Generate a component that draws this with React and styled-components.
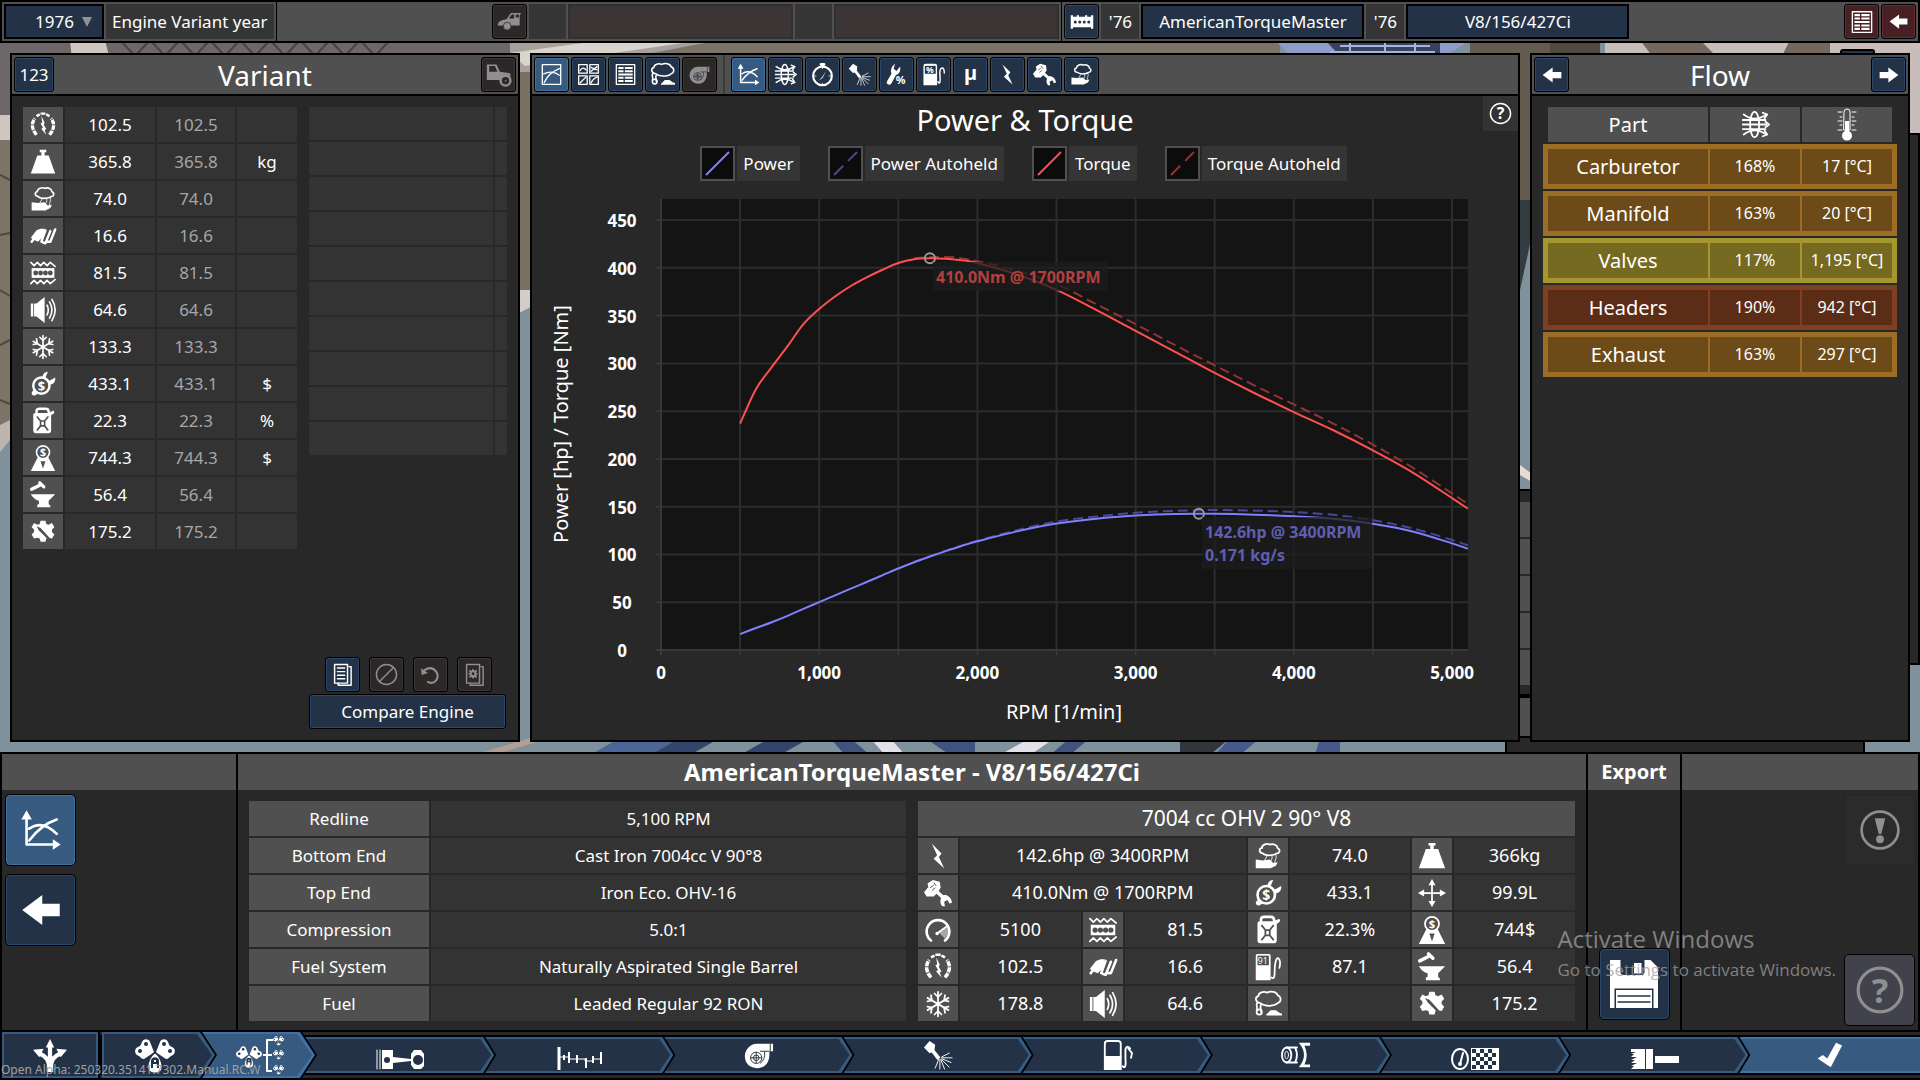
import styled, { createGlobalStyle, css } from 'styled-components'

const GlobalStyle = createGlobalStyle`
  *, *::before, *::after {
    box-sizing: border-box;
  }

  body {
    margin: 0;
    background: #7f929c;
    color: #ffffff;
    font-family: "Noto Sans", "Open Sans", sans-serif;
    font-size: 17px;
    line-height: 23px;
  }

  button, select {
    font: inherit;
    color: inherit;
    padding: 0;
    margin: 0;
    cursor: pointer;
  }

  h1, h2, p {
    margin: 0;
    font-weight: normal;
  }
`;

/* ---------- icons ---------- */

const stroke = (width) => ({
  fill: 'none',
  stroke: 'currentColor',
  strokeWidth: width,
  strokeLinecap: 'round',
  strokeLinejoin: 'round',
});

const cloud = 'M9 14C5 14 4 10 8 8C8 4 13 3 16 4C19 2 25 3 25 7C30 8 29 13 25 14C23 16 19 16 17 15C14 16 11 16 9 14Z';
const gearPath = 'M13 2h6l1 4 3 1 4-2 3 5-3 3v3l3 3-3 5-4-1-3 1-1 4h-6l-1-4-3-1-4 1-3-5 3-3v-3l-3-3 3-5 4 2 3-1z';

// drawn in a 40 x 34 box
const Flower = () => (
  <>
    <g fill="currentColor">
      <path d="M18 14L9 20C6 20 6 18 4 17C-1 16-1 9 3 8C6 7 6 5 7 3C9-1 14 0 15 3L19 13Z" />
      <path d="M22 14L31 20C34 20 34 18 36 17C41 16 41 9 37 8C34 7 34 5 33 3C31-1 26 0 25 3L21 13Z" />
    </g>
    <path d="M20 14C23 16 27 22 27 28C27 32 24 34 20 34C16 34 13 32 13 28C13 22 17 16 20 14Z" fill="currentColor" stroke="#233246" strokeWidth="1" />
    <g fill="#233246">
      <circle cx="11" cy="5" r="2" />
      <circle cx="5" cy="12" r="2" />
      <circle cx="29" cy="5" r="2" />
      <circle cx="35" cy="12" r="2" />
      <path d="M16 29V22C16 17 24 17 24 22V29H22V25H18V29ZM19 23H21V21H19Z" />
    </g>
  </>
);

const icons = {
  gauge: (
    <>
      <path d="M8 28Q-1 17 6 8" {...stroke(4)} strokeLinecap="butt" strokeDasharray="6 1" />
      <path d="M24 28Q33 17 26 8" {...stroke(4)} strokeLinecap="butt" strokeDasharray="6 1" />
      <path d="M8 5L12 3M20 3L24 5M13 2H19" {...stroke(3)} strokeLinecap="butt" />
      <path d="M14 5L18 13 17 16 20 21 18 22 20 28 14 21 16 19 13 14 15 13Z" fill="currentColor" />
    </>
  ),
  weight: <path d="M12 1H20V4H18V8H23L31 30H1L9 8H14V4H12Z" fill="currentColor" />,
  smoothness: (
    <>
      <path d="M10 13C5 12 6 7 9 7C9 3 15 1 18 3C22 1 27 4 27 7C31 9 29 13 26 13C22 16 13 16 10 13Z" {...stroke(2)} />
      <path d="M25 14C27 18 22 23 24 26M20 15C23 20 17 22 18 25M15 16L12 21" {...stroke(1)} />
      <path d="M2 20L10 21 18 20 22 24 27 23 25 27 19 30 2 30Z" fill="currentColor" />
    </>
  ),
  response: (
    <>
      <path d="M1 18L8 9 13 7 18 7 16 17 10 23 5 21Z" fill="currentColor" />
      <path d="M2 23L5 19M19 9L14 23M25 10L19 25 16 24M31 8L25 23H22" {...stroke(3)} />
    </>
  ),
  reliability: (
    <>
      <path d="M1 3L5 7 9 3 13 7 17 3 21 7 25 3 31 8M1 29L5 25 9 29 13 25 17 29 21 25 25 29 31 24" {...stroke(2)} />
      <path d="M2 10H30V22H2Z" fill="currentColor" />
      <g fill="#505050">
        <circle cx="7" cy="16" r="3" />
        <circle cx="13" cy="16" r="3" />
        <circle cx="19" cy="16" r="3" />
        <circle cx="25" cy="16" r="3" />
      </g>
    </>
  ),
  sound: (
    <>
      <path d="M1 8H4V24H1ZM5 8H8L18 0V32L8 24H5Z" fill="currentColor" />
      <path d="M21 10Q24 16 21 22M24 6Q30 16 24 26M27 3Q35 16 27 29" {...stroke(2)} />
    </>
  ),
  snow: (
    <g {...stroke(2)}>
      <path d="M16 2V30M4 9L28 23M4 23L28 9" />
      <path d="M12 4L16 8 20 4M12 28L16 24 20 28M4 13L9 12 8 6M28 13L23 12 24 6M4 19L9 20 8 26M28 19L23 20 24 26" />
    </g>
  ),
  service: (
    <>
      <path d="M22 1L19 8 24 12 31 8C32 15 26 18 22 16L8 29C5 32 0 29 3 25L16 12C14 6 17 1 22 1Z" fill="currentColor" />
      <circle cx="14" cy="18" r="10" fill="#505050" stroke="currentColor" strokeWidth="3" />
      <text x="14" y="24" textAnchor="middle" fontSize="16" fontWeight="bold" fill="currentColor">$</text>
    </>
  ),
  jerrycan: (
    <>
      <path d="M8 7V4Q8 1 12 1H19Q23 1 23 5" {...stroke(3)} />
      <path d="M4 8Q4 6 7 6H22L29 3 30 6 26 9V28Q26 31 23 31H7Q4 31 4 28Z" fill="currentColor" />
      <path d="M9 11L13 16V22L9 27M22 11L18 16V22L22 27M13 16H18M13 22H18" {...stroke(2)} stroke="#505050" />
    </>
  ),
  person: (
    <>
      <path d="M10 14L1 32H31L22 14Z" fill="currentColor" />
      <path d="M13 20H19L16 29Z" fill="#505050" />
      <circle cx="16" cy="9" r="8" fill="#505050" stroke="currentColor" strokeWidth="2" />
      <text x="16" y="14" textAnchor="middle" fontSize="13" fontWeight="bold" fill="currentColor">$</text>
    </>
  ),
  anvil: (
    <>
      <path d="M2 9L12 4M12 1L17 6" {...stroke(4)} />
      <path d="M1 15H31L23 23V27L25 29V31H9V28L11 27V23C6 22 3 18 1 15Z" fill="currentColor" />
    </>
  ),
  gear: (
    <>
      <path d={gearPath} fill="currentColor" />
      <path d="M8 9L13 11 24 23 22 25 11 14Z" fill="#505050" />
    </>
  ),
  bolt: <path d="M9 2L20 13 17 17 23 30 11 19 15 15Z" fill="currentColor" />,
  fist: (
    <>
      <path d="M0 15L5 9 4 5 10 1 18 3 19 10 16 15 11 20 3 20Z" fill="currentColor" />
      <path d="M7 10L11 7M9 13L13 10M11 4L14 8" stroke="#3c434c" strokeWidth="1" />
      <path d="M14 14L24 23" {...stroke(4)} strokeLinecap="butt" />
      <path d="M21 19C25 17 31 20 32 27L29 28 27 24 23 26 24 31 21 31C18 28 18 23 21 19Z" fill="currentColor" />
    </>
  ),
  tacho: (
    <>
      <path d="M8 28A13 13 0 1 1 24 28" {...stroke(3)} />
      <path d="M16 18L28 10V19L24 26Z" fill="currentColor" opacity="0.5" />
      <path d="M15 20L27 11" {...stroke(2)} />
      <circle cx="15" cy="20" r="2" fill="currentColor" />
    </>
  ),
  octane: (
    <>
      <path d="M2 31V3Q2 1 4 1H17Q19 1 19 3V31Z" fill="currentColor" />
      <path d="M4 3H17V14H4Z" fill="#505050" />
      <text x="10" y="12" textAnchor="middle" fontSize="10" fill="currentColor">91</text>
      <path d="M20 28C25 32 23 20 24 14Q25 5 28 6 31 9 29 17" {...stroke(2)} />
    </>
  ),
  emissions: (
    <>
      <path d="M7 15C1 14 1 8 5 7C5 3 11 1 15 3C19 1 26 2 27 6C32 8 31 14 27 15C23 19 12 19 7 15Z" {...stroke(2)} />
      <path d="M4 14C1 18 5 19 3 23M8 17C6 21 9 21 8 25" {...stroke(2)} />
      <circle cx="6" cy="25" r="3" {...stroke(2)} />
      <path d="M14 28L19 23H25L29 26 32 27V29H14Z" fill="currentColor" />
    </>
  ),
  size: (
    <>
      <path d="M16 4V28M4 16H28" {...stroke(2)} />
      <path d="M16 0L20 7H12ZM16 32L12 25H20ZM0 16L7 12V20ZM32 16L25 20V12Z" fill="currentColor" />
    </>
  ),
  miniGraph: (
    <>
      <path d="M2 1H30V31H2Z" {...stroke(2)} />
      <path d="M5 28Q12 13 28 7M4 15Q17 9 28 17" {...stroke(2)} />
    </>
  ),
  fourGraphs: (
    <>
      <path d="M1 1H14V14H1ZM18 1H31V14H18ZM1 18H14V31H1ZM18 18H31V31H18Z" {...stroke(2)} />
      <path d="M3 10Q8 3 12 9M20 5L29 9M20 11L29 4M3 29Q8 24 12 20M20 29Q23 22 29 20" {...stroke(2)} />
    </>
  ),
  sheet: (
    <>
      <path d="M2 1H30V31H2Z" {...stroke(2)} />
      <path d="M5 6H13M15 6H27M5 11H13M15 11H27M5 16H27M5 21H13M15 21H27M5 26H13M15 26H27" {...stroke(3)} strokeLinecap="butt" />
    </>
  ),
  turbo: (
    <>
      <path d="M14 4H31V12H27C28 22 24 30 14 30C2 30-2 18 3 10C6 6 9 4 14 4Z" fill="currentColor" />
      <g fill="none" stroke="#2c3038" strokeWidth="1">
        <circle cx="13" cy="19" r="6" />
        <circle cx="13" cy="19" r="3" />
        <path d="M7 19H19M13 13V25M22 12Q23 21 17 25M28 4V12M17 12H27" />
      </g>
    </>
  ),
  axes: (
    <>
      <path d="M5 7V27H27" {...stroke(2)} strokeLinecap="butt" />
      <path d="M5 1L9 8H1ZM31 27L25 31V23Z" fill="currentColor" />
      <path d="M7 24Q16 12 28 8M7 15Q17 8 28 19" {...stroke(2)} />
    </>
  ),
  flow: (
    <g {...stroke(2)}>
      <ellipse cx="15" cy="16" rx="5" ry="14" />
      <path d="M2 16H28M2 11H27M2 21H27M3 5Q15 14 28 5M3 27Q15 18 28 27" />
      <path d="M24 3L29 5 26 9M27 13L31 16 27 19M26 23L29 27 24 29" />
    </g>
  ),
  stopwatch: (
    <>
      <circle cx="16" cy="18" r="13" {...stroke(3)} />
      <path d="M14 2H18" {...stroke(4)} />
      <path d="M10 25L15 20 21 11 16 21Z" fill="currentColor" />
      <path d="M16 6V8M16 28V30M5 18H7M25 18H27" {...stroke(1)} />
    </>
  ),
  spray: (
    <>
      <path d="M1 8L7 1 13 5 12 12 7 14Z" fill="currentColor" />
      <path d="M10 11L17 20" {...stroke(4)} strokeLinecap="butt" />
      <path d="M17 20L13 30M18 21L18 31M19 21L23 31M20 21L28 29M20 20L30 24M20 19L31 19M20 18L28 14" {...stroke(1)} />
    </>
  ),
  wrenchPercent: (
    <>
      <path d="M5 30Q1 29 3 25L9 15Q6 7 14 1L12 8 16 11 21 5Q23 14 15 17L9 28Q7 31 5 30Z" fill="currentColor" />
      <text x="15" y="29" fontSize="15" fontWeight="bold" fill="currentColor">%</text>
    </>
  ),
  pumpPercent: (
    <>
      <path d="M2 31V4Q2 1 5 1H18Q21 1 21 4V31Z" fill="currentColor" />
      <path d="M4 4H19V15H4Z" fill="#233246" />
      <text x="11" y="14" textAnchor="middle" fontSize="12" fontWeight="bold" fill="currentColor">%</text>
      <path d="M22 26Q26 32 25 19 24 7 28 7 31 7 31 14" {...stroke(2)} />
    </>
  ),
  mu: <text x="16" y="24" textAnchor="middle" fontSize="28" fontWeight="bold" fill="currentColor">µ</text>,
  arrowLeft: <path d="M1 16L17 4V11H31V21H17V28Z" fill="currentColor" />,
  arrowRight: <path d="M31 16L15 4V11H1V21H15V28Z" fill="currentColor" />,
  thermometer: (
    <>
      <path d="M13 3Q13 0 16 0 19 0 19 3V21H13Z" {...stroke(1)} />
      <path d="M14 12H18V22A5 5 0 1 1 14 22Z" fill="currentColor" />
      <path d="M7 3H11M9 8H11M7 12H11M9 16H11M7 21H11M21 3H25M21 8H23M21 12H25M21 16H23M21 21H25" {...stroke(1)} />
    </>
  ),
  car: (
    <>
      <path d="M1 20Q2 14 12 13L18 5H31L29 8V21H1Z" fill="currentColor" />
      <path d="M15 12L19 7H22V12ZM24 7H28V11H24Z" fill="#2c2828" />
      <circle cx="13" cy="22" r="5" fill="currentColor" stroke="#2c2828" strokeWidth="1" />
    </>
  ),
  truck: (
    <>
      <path d="M1 3H13L17 12 30 14V22H1Z" fill="currentColor" />
      <path d="M4 5H11L14 12H4Z" fill="#2c2828" />
      <circle cx="24" cy="23" r="6" fill="#2c2828" stroke="currentColor" strokeWidth="3" />
      <circle cx="24" cy="23" r="1" fill="currentColor" />
    </>
  ),
  engine: (
    <>
      <path d="M1 7H4V9H9V7H12V9H20V7H23V9H28V7H31V25H28V23H4V25H1Z" fill="currentColor" />
      <g fill="#233246">
        <circle cx="7" cy="16" r="2" />
        <circle cx="13" cy="16" r="2" />
        <circle cx="19" cy="16" r="2" />
        <circle cx="25" cy="16" r="2" />
      </g>
    </>
  ),
  pages: (
    <>
      <path d="M25 5H28V31H10V28" {...stroke(2)} />
      <path d="M5 2H23V28H5Z" {...stroke(2)} />
      <path d="M9 7H19M9 12H19M9 17H19M9 22H19" {...stroke(2)} />
    </>
  ),
  pageGear: (
    <>
      <path d="M25 5H28V31H10V28" {...stroke(2)} />
      <path d="M5 2H23V28H5Z" {...stroke(2)} />
      <path d="M14 10V20M9 15H19M10 11L18 19M10 19L18 11" {...stroke(3)} />
      <circle cx="14" cy="15" r="2" fill="#2c2828" />
    </>
  ),
  none: (
    <>
      <circle cx="16" cy="16" r="14" {...stroke(2)} />
      <path d="M7 25L25 7" {...stroke(2)} />
    </>
  ),
  undo: (
    <>
      <path d="M8 9Q18 2 25 11C31 21 22 31 13 26" {...stroke(3)} />
      <path d="M3 6L13 13 4 16Z" fill="currentColor" />
    </>
  ),
  help: (
    <>
      <circle cx="16" cy="16" r="14" {...stroke(2)} />
      <text x="16" y="24" textAnchor="middle" fontSize="22" fontWeight="bold" fill="currentColor">?</text>
    </>
  ),
  alert: (
    <>
      <circle cx="16" cy="16" r="14" {...stroke(2)} />
      <path d="M12 7H20L17 19H15Z" fill="currentColor" />
      <circle cx="16" cy="23" r="3" fill="currentColor" />
    </>
  ),
  save: (
    <>
      <path d="M0 0H27L32 5V32H0Z" fill="currentColor" />
      <path d="M7 0H23V8Q23 10 21 10H9Q7 10 7 8ZM3 19H29V32H3Z" fill="#233246" />
      <path d="M16 2H21V9H16ZM4 20H28V32H4Z" fill="currentColor" />
      <path d="M5 24H27M5 28H27" stroke="#233246" strokeWidth="1" />
    </>
  ),
  threeWay: (
    <>
      <path d="M15 32V25Q14 18 7 15M17 32V25Q18 18 25 15M16 32V7" {...stroke(4)} strokeLinecap="butt" />
      <path d="M16 1L20 9H12ZM0 11L10 10 6 18ZM32 11L22 10 26 18Z" fill="currentColor" />
    </>
  ),
  check: <path d="M3 20L9 16 14 20 24 2 31 5 18 30Z" fill="currentColor" />,
  exhaust: (
    <>
      <ellipse cx="6" cy="16" rx="5" ry="8" {...stroke(2)} />
      <ellipse cx="6" cy="16" rx="2" ry="4" {...stroke(1)} />
      <path d="M6 8H17M6 24H17M15 8Q19 16 15 24" {...stroke(2)} />
      <path d="M31 3H19Q30 16 19 29H31V26H25Q30 16 25 6H31Z" fill="currentColor" />
    </>
  ),
  pump: (
    <>
      <path d="M2 17H21V32H2Z" fill="currentColor" />
      <path d="M3 17V4Q3 1 6 1H17Q20 1 20 4V17" {...stroke(2)} />
      <path d="M22 28Q26 32 25 20V10Q26 5 30 9M28 9L32 14 31 19" {...stroke(2)} />
    </>
  ),
};

// wider drawings of the step bar, 50 x 42 box
const wideIcons = {
  family: <g transform="translate(3 5)"><Flower /></g>,
  variant: (
    <>
      <g transform="translate(1 12) scale(0.65)"><Flower /></g>
      <path d="M28 21H37M38 6H32V37H37" {...stroke(2)} strokeLinecap="butt" />
      <g transform="translate(38 2) scale(0.28)"><Flower /></g>
      <g transform="translate(38 16) scale(0.28)"><Flower /></g>
      <g transform="translate(38 31) scale(0.28)"><Flower /></g>
    </>
  ),
  piston: (
    <>
      <path d="M1 13V32M4 13V32" {...stroke(1)} />
      <path d="M6 13H17V20L35 22V17L38 13H45L48 17V29L45 32H38L35 28V24L17 26V32H6Z" fill="currentColor" />
      <circle cx="11" cy="23" r="3" fill="#233246" />
      <circle cx="42" cy="23" r="5" fill="#233246" />
    </>
  ),
  crank: (
    <>
      <path d="M4 10V33" {...stroke(3)} strokeLinecap="butt" />
      <path d="M5 20H14V22H22V22H30V24H38V22H46" {...stroke(1)} />
      <path d="M9 18V23M14 15V26M22 18V26M31 21V31M38 19V26M46 15V27" {...stroke(2)} strokeLinecap="butt" />
    </>
  ),
  track: (
    <>
      <ellipse cx="9" cy="22" rx="8" ry="10" {...stroke(2)} />
      <path d="M9 27L12 16" {...stroke(2)} />
      <circle cx="9" cy="27" r="2" fill="currentColor" />
      <path d="M20 11H48V33H20Z" fill="currentColor" />
      <g fill="#233246">
        {[0, 1, 2, 3, 4].map(row => [0, 1, 2].map(col => (
          <path key={`${row}-${col}`} d={`M${21 + col * 8 + (row % 2) * 4} ${12 + row * 4}h4v4h-4z`} />
        )))}
      </g>
    </>
  ),
  brush: (
    <>
      <path d="M1 12H15V32H1L4 29H1L7 26H1L5 23H1L7 20H1L4 17H1L6 15H1Z" fill="currentColor" />
      <path d="M16 12H23V32H16ZM25 19H49V26H25Z" fill="currentColor" />
    </>
  ),
};

const Svg = styled.svg`
  display: block;
  flex: none;
  overflow: visible;
`;

function Icon({ name, size = 24 }) {
  if (wideIcons[name]) {
    return (
      <Svg width="50" height="42" viewBox="0 0 50 42" aria-hidden="true">
        {wideIcons[name]}
      </Svg>
    );
  }
  return (
    <Svg width={size} height={size} viewBox="0 0 32 32" aria-hidden="true">
      {icons[name]}
    </Svg>
  );
}

/* ---------- shared parts ---------- */

const tones = {
  blue: css`
    background: #233246;
    box-shadow: inset 0 0 0 1px #29486b;
  `,
  active: css`
    background: #365a80;
    box-shadow: inset 0 0 0 1px #4070a2;
  `,
  off: css`
    background: #2c2828;
    box-shadow: inset 0 0 0 1px #3a3636;
    color: #8f8f8f;
  `,
  red: css`
    background: #462022;
    box-shadow: inset 0 0 0 1px #6b2c30;
  `,
  faint: css`
    background: #2c2b2b;
    border-color: #242424;
    color: #8f8f8f;
  `,
  slate: css`
    background: #42424d;
    color: #8f8f8f;
  `,
};

const ToolButton = styled.button`
  display: flex;
  align-items: center;
  justify-content: center;
  flex: none;
  width: ${props => props.$wide ? '40px' : '35px'};
  height: 35px;
  border: 1px solid #000000;
  border-radius: 3px;
  ${props => tones[props.$tone || 'blue']}
`;

const BigButton = styled(ToolButton)`
  width: 71px;
  height: 72px;
  border-radius: 5px;
`;

const Cell = styled.div`
  display: flex;
  align-items: center;
  justify-content: center;
  height: 35px;
  width: ${props => props.$width || 'auto'};
  padding: ${props => props.$pad ? '0 6px' : '0'};
  background: #353535;
`;

const Panel = styled.section`
  position: relative;
  display: flex;
  flex-direction: column;
  border: 2px solid #000000;
  background: #282828;
  flex: ${props => props.$width ? 'none' : '1'};
  width: ${props => props.$width || 'auto'};
  min-width: 0;
`;

const PanelHeader = styled.header`
  display: flex;
  align-items: center;
  gap: 2px;
  height: 41px;
  padding: 0 2px;
  background: #505050;
  border-bottom: 2px solid #000000;
`;

const TitledHeader = styled(PanelHeader)`
  display: grid;
  grid-template-columns: 1fr auto 1fr;

  & > :last-child {
    justify-self: end;
  }
`;

const PanelTitle = styled.h2`
  text-align: center;
  font-size: 28px;
  line-height: 36px;
`;

/* ---------- garage backdrop ---------- */

const Scene = styled.svg`
  position: absolute;
  inset: 0;
  width: 100%;
  height: 100%;
`;

const BehindPanel = styled.div`
  position: absolute;
  border: 2px solid #000000;
  background: #282828;
`;

const DetailsBehind = styled(BehindPanel)`
  top: 489px;
  right: 55px;
  width: 360px;
  height: 265px;
  padding-top: 11px;
`;

const DetailRow = styled.div`
  height: 35px;
  margin-bottom: 2px;
  background: #505050;
`;

const DetailFooter = styled.div`
  height: 44px;
  margin-top: 9px;
  border-top: 4px solid #000000;
  border-bottom: 2px solid #000000;
  background: #505050;
`;

const EdgeBehind = styled(BehindPanel)`
  top: 133px;
  right: 0;
  width: 60px;
  height: 532px;
`;

const TabBehind = styled(BehindPanel)`
  top: 49px;
  right: 45px;
  width: 35px;
  height: 30px;
  border-radius: 3px;
  background: #233246;
`;

function Backdrop() {
  return (
    <>
      <Scene viewBox="0 0 1920 1080" preserveAspectRatio="none" aria-hidden="true">
        <rect width="1920" height="1080" fill="#7f929c" />
        <rect width="530" height="115" fill="#6d676a" />
        <path d="M70 40H105L110 60H72ZM0 115H40V140H0Z" fill="#cfc6c0" />
        <path d="M120 40L135 56 150 40 165 56 180 40 195 56 210 40 225 56 240 40 255 56 270 40 285 56 300 40 315 56 330 40 345 56 360 40 375 56 390 40" fill="none" stroke="#484246" strokeWidth="2" />
        <rect y="140" width="40" height="290" fill="#7c7466" />
        <path d="M0 175L10 180M0 235L10 233M0 290L10 296M0 345L10 340M0 400L10 404" stroke="#4d4840" strokeWidth="2" />
        <path d="M0 425L10 420V440L0 452Z" fill="#bdb4ae" />
        <path d="M510 40H720L530 75H510Z" fill="#a8a09a" />
        <path d="M720 40H1280V60H620Z" fill="#7b7367" />
        <rect x="515" y="72" width="20" height="220" fill="#7b7163" />
        <path d="M515 290H535V305L515 315Z" fill="#d4ccc8" />
        <path d="M510 53L590 42H690L525 66Z" fill="#dad4cf" />
        <path d="M1275 40H1470L1440 60H1295Z" fill="#8d9cc8" />
        <path d="M1325 40H1440V56H1340Z" fill="#37425f" />
        <path d="M1330 52H1435M1340 46H1430M1350 40V56M1385 40V56M1415 40V56" stroke="#a7b5dd" strokeWidth="2" />
        <rect x="1470" y="40" width="80" height="180" fill="#645b51" />
        <path d="M1520 200H1532V235L1520 290Z" fill="#333c40" />
        <rect x="1550" y="40" width="50" height="20" fill="#504942" />
        <rect x="1605" y="40" width="315" height="95" fill="#c9bdbb" />
        <path d="M1640 40H1700L1720 60H1655ZM1790 40H1830V60H1780Z" fill="#74675e" />
        <path d="M1520 465L1532 474V482L1520 475Z" fill="#e7ddd0" />
        <path d="M480 753L530 738H550L500 753Z" fill="#b39e92" />
        <path d="M590 755L620 738H680L650 755Z" fill="#4b6697" />
        <path d="M650 755L680 738H720L690 755ZM740 755L770 738H810L780 755Z" fill="#34456b" />
        <path d="M830 738H850L870 755H845ZM925 738H975V755H950ZM1050 755L1070 738H1090L1070 755Z" fill="#3f537e" />
        <path d="M870 738H890L905 755H885ZM1000 755L1030 738H1055L1030 755Z" fill="#e3e1e8" />
        <path d="M1180 738H1230L1210 755H1180Z" fill="#33353d" />
        <path d="M1230 738H1260L1240 755H1215ZM1320 738H1340V755H1315Z" fill="#46598a" />
      </Scene>
      <TabBehind />
      <EdgeBehind />
      <DetailsBehind>
        {[0, 1, 2, 3, 4].map(row => <DetailRow key={row} />)}
        <DetailFooter />
      </DetailsBehind>
    </>
  );
}

/* ---------- top bar ---------- */

const Page = styled.div`
  position: relative;
  display: flex;
  flex-direction: column;
  min-height: 100vh;
`;

const TopBarOuter = styled.header`
  position: relative;
  display: flex;
  align-items: center;
  gap: 2px;
  height: 43px;
  padding: 0 2px;
  background: #505050;
  border: 2px solid #000000;
`;

const YearPicker = styled.div`
  position: relative;

  & > svg {
    position: absolute;
    right: 12px;
    top: 13px;
    pointer-events: none;
  }
`;

const YearSelect = styled.select`
  appearance: none;
  width: 100px;
  height: 35px;
  padding: 0 28px 0 18px;
  border: 2px solid #000000;
  border-radius: 0;
  background: #233246;
  text-align-last: right;
`;

const TopSection = styled.div`
  display: flex;
  gap: 2px;
  flex: ${props => props.$grow ? props.$grow : 'none'};
  justify-content: ${props => props.$end ? 'flex-end' : 'flex-start'};
`;

const TopDivider = styled.div`
  width: 1px;
  height: 39px;
  background: #000000;
`;

const EmptySlot = styled.div`
  width: 225px;
  height: 35px;
  border: 2px solid #303030;
  background: #3c3535;
`;

const NameButton = styled.button`
  width: 223px;
  height: 35px;
  border: 2px solid #000000;
  background: #233246;
`;

function TopBar() {
  return (
    <TopBarOuter>
      <YearPicker>
        <YearSelect id="variant-year" defaultValue="1976">
          <option>1976</option>
          <option>1977</option>
        </YearSelect>
        <svg width="10" height="10" viewBox="0 0 10 10" aria-hidden="true">
          <path d="M0 0H10L5 10Z" fill="#8f9297" />
        </svg>
      </YearPicker>
      <Cell as="label" htmlFor="variant-year" $pad>Engine Variant year</Cell>
      <TopDivider />
      <TopSection $grow="213" />
      <TopSection>
        <ToolButton $tone="off" aria-label="Car"><Icon name="car" size={25} /></ToolButton>
        <Cell $width="37px" />
        <EmptySlot />
        <Cell $width="37px" />
        <EmptySlot />
      </TopSection>
      <TopDivider />
      <TopSection>
        <ToolButton aria-label="Engine"><Icon name="engine" size={24} /></ToolButton>
        <Cell $width="38px">'76</Cell>
        <NameButton>AmericanTorqueMaster</NameButton>
        <Cell $width="38px">'76</Cell>
        <NameButton>V8/156/427Ci</NameButton>
      </TopSection>
      <TopSection $grow="286" $end>
        <ToolButton $tone="red" aria-label="Notes"><Icon name="sheet" size={22} /></ToolButton>
        <ToolButton $tone="red" aria-label="Exit"><Icon name="arrowLeft" size={19} /></ToolButton>
      </TopSection>
    </TopBarOuter>
  );
}

/* ---------- variant panel ---------- */

const VariantBody = styled.div`
  display: flex;
  flex: 1;
  gap: 8px;
  padding: 9px;
`;

const Table = styled.table`
  border-collapse: separate;
  border-spacing: 2px;
  table-layout: fixed;
  text-align: center;
  width: ${props => props.$width || '100%'};
`;

const Td = styled.td`
  height: ${props => props.$short ? '33px' : '35px'};
  width: ${props => props.$width || 'auto'};
  padding: 0;
  background: #333333;
  color: ${props => props.$muted ? '#a6a6a6' : '#ffffff'};
  font-size: ${props => props.$large ? '18px' : '17px'};
`;

const Th = styled.th`
  height: 35px;
  width: ${props => props.$width || 'auto'};
  padding: 0;
  background: #505050;
  font-weight: normal;
  font-size: ${props => props.$large ? '21px' : '17px'};

  & > svg {
    margin: 0 auto;
  }
`;

const CompareColumn = styled.div`
  display: flex;
  flex-direction: column;
  flex: 1;
`;

const CompareTools = styled.div`
  display: flex;
  justify-content: center;
  gap: 9px;
  margin-top: auto;
`;

const CompareButton = styled(ToolButton)`
  width: auto;
  margin: 2px 3px 2px 2px;
`;

const variantStats = [
  ['gauge', 'Performance', '102.5', ''],
  ['weight', 'Weight', '365.8', 'kg'],
  ['smoothness', 'Smoothness', '74.0', ''],
  ['response', 'Responsiveness', '16.6', ''],
  ['reliability', 'Reliability', '81.5', ''],
  ['sound', 'Loudness', '64.6', ''],
  ['snow', 'Cooling', '133.3', ''],
  ['service', 'Service cost', '433.1', '$'],
  ['jerrycan', 'Efficiency', '22.3', '%'],
  ['person', 'Material cost', '744.3', '$'],
  ['anvil', 'Tooling', '56.4', ''],
  ['gear', 'Engineering', '175.2', ''],
];

function VariantPanel() {
  return (
    <Panel $width="510px">
      <TitledHeader>
        <ToolButton $wide>123</ToolButton>
        <PanelTitle>Variant</PanelTitle>
        <ToolButton $tone="off" aria-label="Trim"><Icon name="truck" size={26} /></ToolButton>
      </TitledHeader>
      <VariantBody>
        <div>
          <Table $width="278px">
            <tbody>
              {variantStats.map(([icon, label, value, unit]) => (
                <tr key={icon}>
                  <Th scope="row" $width="40px" aria-label={label}><Icon name={icon} size={26} /></Th>
                  <Td $width="90px">{value}</Td>
                  <Td $width="78px" $muted>{value}</Td>
                  <Td $width="60px">{unit}</Td>
                </tr>
              ))}
            </tbody>
          </Table>
        </div>
        <CompareColumn>
          <Table>
            <tbody>
              {Array.from({ length: 10 }, (_, row) => (
                <tr key={row}>
                  <Td $short />
                  <Td $short $width="12px" />
                </tr>
              ))}
            </tbody>
          </Table>
          <CompareTools>
            <ToolButton aria-label="Copy"><Icon name="pages" size={23} /></ToolButton>
            <ToolButton $tone="off" aria-label="Clear"><Icon name="none" size={23} /></ToolButton>
            <ToolButton $tone="off" aria-label="Undo"><Icon name="undo" size={22} /></ToolButton>
            <ToolButton $tone="off" aria-label="Copy settings"><Icon name="pageGear" size={23} /></ToolButton>
          </CompareTools>
          <CompareButton>Compare Engine</CompareButton>
        </CompareColumn>
      </VariantBody>
    </Panel>
  );
}

/* ---------- chart panel ---------- */

const ToolDivider = styled.div`
  width: 2px;
  height: 39px;
  margin: 0 4px;
  background: #3c3c3c;
`;

const HelpButton = styled.button`
  position: absolute;
  top: 41px;
  right: 0;
  display: flex;
  align-items: center;
  justify-content: center;
  width: 35px;
  height: 35px;
  border: 0;
  background: #333333;
`;

const ChartTitle = styled.h2`
  padding: 6px 0 8px;
  text-align: center;
  font-size: 29px;
  line-height: 36px;
`;

const Legend = styled.div`
  display: flex;
  justify-content: center;
  gap: 28px;
  padding-right: 3px;
`;

const LegendItem = styled.div`
  display: flex;
  gap: 2px;
`;

const Swatch = styled.svg`
  width: 35px;
  height: 35px;
  border: 2px solid #505050;
  background: #0c0c0c;
`;

const ChartSvg = styled.svg`
  display: block;
  flex: 1;
  width: 100%;
  min-height: 0;
  font-size: 17px;
`;

const series = [
  { name: 'Power', color: '#8080ff', dash: 'none' },
  { name: 'Power Autoheld', color: '#484894', dash: '13 7' },
  { name: 'Torque', color: '#ff5050', dash: 'none' },
  { name: 'Torque Autoheld', color: '#923434', dash: '13 7' },
];

const torque = [
  [500, 237], [600, 273], [700, 296], [800, 318], [900, 341], [1000, 357], [1100, 370],
  [1200, 381], [1300, 390], [1400, 398], [1500, 405], [1600, 409], [1700, 410], [1800, 409.5],
  [1900, 408], [2000, 405], [2250, 393], [2500, 377], [2750, 356], [3000, 334],
  [3250, 312], [3500, 290], [3750, 269], [4000, 249], [4250, 230], [4500, 209],
  [4750, 186], [5000, 159], [5100, 148],
];

const torqueHeld = [
  [1600, 410], [1700, 411], [1850, 411], [2000, 407], [2250, 397], [2500, 383], [2750, 362],
  [3000, 341], [3250, 319], [3500, 298], [3750, 277], [4000, 257], [4250, 237], [4500, 215],
  [4750, 191], [5000, 164], [5100, 153],
];

const toPower = points => points.map(([rpm, nm]) => [rpm, nm * rpm / 7121]);
const chartX = rpm => 129 + rpm * 0.1582;
const chartY = value => 469 - value * 0.9554;

// Catmull-Rom spline through the samples
const toCurve = (samples) => {
  const points = samples.map(([rpm, value]) => [chartX(rpm), chartY(value)]);
  return points.reduce((path, [x, y], i) => {
    if (i === 0) return `M${x} ${y}`;
    const [px, py] = points[i - 1];
    const [bx, by] = points[i - 2] || points[i - 1];
    const [nx, ny] = points[i + 1] || points[i];
    return `${path}C${px + (x - bx) / 6} ${py + (y - by) / 6} ${x - (nx - px) / 6} ${y - (ny - py) / 6} ${x} ${y}`;
  }, '');
};

function Chart() {
  const values = [0, 50, 100, 150, 200, 250, 300, 350, 400, 450];
  const rpms = Array.from({ length: 11 }, (_, i) => i * 500);
  return (
    <ChartSvg viewBox="0 0 986 559" role="img" aria-label="Power and torque by RPM">
      <rect x="129" y="18" width="807" height="451" fill="#141414" />
      <g stroke="#2c2c2c" strokeWidth="2">
        {values.map(value => (
          <line key={value} x1="124" x2="936" y1={chartY(value)} y2={chartY(value)} />
        ))}
        {rpms.map(rpm => (
          <line key={rpm} x1={chartX(rpm)} x2={chartX(rpm)} y1="18" y2="474" />
        ))}
      </g>
      <path d="M129 18V469H936M124 469H129M129 469V474" fill="none" stroke="#454545" strokeWidth="1" />
      <g stroke="#404040" strokeWidth="1">
        {values.map(value => (
          <line key={value} x1="124" x2="129" y1={chartY(value)} y2={chartY(value)} />
        ))}
        {rpms.map(rpm => (
          <line key={rpm} x1={chartX(rpm)} x2={chartX(rpm)} y1="469" y2="474" />
        ))}
      </g>
      <g fill="#ffffff" fontWeight="bold" textAnchor="middle">
        {values.map(value => (
          <text key={value} x="90" y={chartY(value) + 7}>{value}</text>
        ))}
        {rpms.filter(rpm => rpm % 1000 === 0).map(rpm => (
          <text key={rpm} x={chartX(rpm)} y="498">{rpm.toLocaleString('en-US')}</text>
        ))}
      </g>
      <g fill="#ffffff" fontSize="20" textAnchor="middle">
        <text transform="translate(36 243) rotate(-90)">Power [hp] / Torque [Nm]</text>
        <text x="532" y="538">RPM [1/min]</text>
      </g>
      <g fill="none" strokeWidth="2" strokeLinejoin="round">
        <path d={toCurve(toPower(torqueHeld))} stroke="#484894" strokeDasharray="10 5" />
        <path d={toCurve(torqueHeld)} stroke="#923434" strokeDasharray="10 5" />
        <path d={toCurve(toPower(torque))} stroke="#8080ff" />
        <path d={toCurve(torque)} stroke="#ff5050" />
        <circle cx={chartX(1700)} cy={chartY(410)} r="5" stroke="#999999" />
        <circle cx={chartX(3400)} cy={chartY(142.6)} r="5" stroke="#999999" />
      </g>
      <g fill="#1c1c1c" fillOpacity="0.75">
        <rect x="401" y="81" width="175" height="29" />
        <rect x="670" y="336" width="170" height="52" />
      </g>
      <g fontSize="16" fontWeight="bold">
        <text x="404" y="102" fill="#b24040">410.0Nm @ 1700RPM</text>
        <text x="673" y="357" fill="#5e5eb2">142.6hp @ 3400RPM</text>
        <text x="673" y="380" fill="#5e5eb2">0.171 kg/s</text>
      </g>
    </ChartSvg>
  );
}

const viewTools = ['miniGraph', 'fourGraphs', 'sheet', 'emissions', 'turbo'];
const graphTools = ['axes', 'flow', 'stopwatch', 'spray', 'wrenchPercent', 'pumpPercent', 'mu', 'bolt', 'fist', 'smoothness'];

const viewTone = (name) => {
  if (name === 'miniGraph') return 'active';
  return name === 'turbo' ? 'off' : 'blue';
};

function ChartPanel() {
  return (
    <Panel>
      <PanelHeader>
        {viewTools.map(name => (
          <ToolButton key={name} $tone={viewTone(name)} aria-label={name}>
            <Icon name={name} size={name === 'emissions' ? 25 : 21} />
          </ToolButton>
        ))}
        <ToolDivider />
        {graphTools.map(name => (
          <ToolButton key={name} $tone={name === 'axes' ? 'active' : 'blue'} aria-label={name}>
            <Icon name={name} size={23} />
          </ToolButton>
        ))}
      </PanelHeader>
      <HelpButton aria-label="Help"><Icon name="help" size={23} /></HelpButton>
      <ChartTitle>Power &amp; Torque</ChartTitle>
      <Legend>
        {series.map(({ name, color, dash }) => (
          <LegendItem key={name}>
            <Swatch viewBox="0 0 31 31" aria-hidden="true">
              <path d="M4 27L27 4" stroke={color} strokeWidth="2" strokeDasharray={dash} />
            </Swatch>
            <Cell $pad>{name}</Cell>
          </LegendItem>
        ))}
      </Legend>
      <Chart />
    </Panel>
  );
}

/* ---------- flow panel ---------- */

const FlowTable = styled.table`
  width: calc(100% - 22px);
  margin: 9px 11px;
  border-collapse: separate;
  border-spacing: 0 2px;
  table-layout: fixed;
  text-align: center;
`;

const flowTones = {
  head: ['#505050', 'transparent'],
  orange: ['#6c4b18', '#9c6d24'],
  yellow: ['#766a20', '#a6962f'],
  red: ['#5b2c16', '#7f4022'],
};

const FlowRow = styled.tr`
  & > * {
    height: ${props => props.$tone === 'head' ? '35px' : '45px'};
    padding: 0;
    font-weight: normal;
    font-size: 16px;
    background: ${props => flowTones[props.$tone][0]};
    background-clip: padding-box;
    border: 0 solid ${props => flowTones[props.$tone][1]};
    border-width: ${props => props.$tone === 'head' ? '0 0 0 2px' : '5px 0 5px 2px'};
  }

  & > :first-child {
    border-left-width: 5px;
    font-size: 20px;
  }

  & > :last-child {
    border-right-width: 5px;
  }

  & svg {
    margin: 0 auto;
  }
`;

const flowParts = [
  ['Carburetor', '168%', '17 [°C]', 'orange'],
  ['Manifold', '163%', '20 [°C]', 'orange'],
  ['Valves', '117%', '1,195 [°C]', 'yellow'],
  ['Headers', '190%', '942 [°C]', 'red'],
  ['Exhaust', '163%', '297 [°C]', 'orange'],
];

function FlowPanel() {
  return (
    <Panel $width="380px">
      <TitledHeader>
        <ToolButton aria-label="Previous"><Icon name="arrowLeft" size={20} /></ToolButton>
        <PanelTitle>Flow</PanelTitle>
        <ToolButton aria-label="Next"><Icon name="arrowRight" size={20} /></ToolButton>
      </TitledHeader>
      <FlowTable>
        <colgroup>
          <col />
          <col width="92" />
          <col width="97" />
        </colgroup>
        <thead>
          <FlowRow $tone="head">
            <th scope="col">Part</th>
            <th scope="col" aria-label="Flow"><Icon name="flow" size={29} /></th>
            <th scope="col" aria-label="Temperature"><Icon name="thermometer" size={32} /></th>
          </FlowRow>
        </thead>
        <tbody>
          {flowParts.map(([part, flow, temp, tone]) => (
            <FlowRow key={part} $tone={tone}>
              <th scope="row">{part}</th>
              <td>{flow}</td>
              <td>{temp}</td>
            </FlowRow>
          ))}
        </tbody>
      </FlowTable>
    </Panel>
  );
}

/* ---------- summary ---------- */

const Workspace = styled.main`
  position: relative;
  display: flex;
  gap: 10px;
  flex: 1;
  padding: 10px;
`;

const Summary = styled.section`
  position: relative;
  display: flex;
  height: 280px;
  gap: 2px;
  padding: 2px;
  background: #000000;
`;

const SummaryColumn = styled.div`
  display: flex;
  flex-direction: column;
  flex: ${props => props.$width ? 'none' : '1'};
  width: ${props => props.$width || 'auto'};
  background: #282828;
`;

const SummaryHeader = styled.h2`
  height: 36px;
  background: #505050;
  text-align: center;
  font-weight: bold;
  font-size: ${props => props.$small ? '20px' : '24px'};
  line-height: 36px;
`;

const SummaryTables = styled.div`
  display: flex;
  gap: 8px;
  padding: 9px;

  & > * {
    flex: 1;
  }
`;

const ButtonStack = styled.div`
  display: flex;
  flex-direction: column;
  flex: 1;
  gap: 8px;
  padding: 4px 3px;
  align-items: ${props => props.$align || 'flex-start'};
  justify-content: ${props => props.$justify || 'flex-start'};
`;

const ExportStack = styled(ButtonStack)`
  padding-bottom: 10px;
`;

const specs = [
  ['Redline', '5,100 RPM'],
  ['Bottom End', 'Cast Iron 7004cc V 90°8'],
  ['Top End', 'Iron Eco. OHV-16'],
  ['Compression', '5.0:1'],
  ['Fuel System', 'Naturally Aspirated Single Barrel'],
  ['Fuel', 'Leaded Regular 92 RON'],
];

const engineStats = [
  [['bolt', '142.6hp @ 3400RPM', 3], ['smoothness', '74.0'], ['weight', '366kg']],
  [['fist', '410.0Nm @ 1700RPM', 3], ['service', '433.1'], ['size', '99.9L']],
  [['tacho', '5100'], ['reliability', '81.5'], ['jerrycan', '22.3%'], ['person', '744$']],
  [['gauge', '102.5'], ['response', '16.6'], ['octane', '87.1'], ['anvil', '56.4']],
  [['snow', '178.8'], ['sound', '64.6'], ['emissions', ''], ['gear', '175.2']],
];

function SummaryPanel() {
  return (
    <Summary>
      <SummaryColumn $width="234px">
        <SummaryHeader />
        <ButtonStack>
          <BigButton $tone="active" aria-label="Graphs"><Icon name="axes" size={42} /></BigButton>
          <BigButton aria-label="Back"><Icon name="arrowLeft" size={40} /></BigButton>
        </ButtonStack>
      </SummaryColumn>
      <SummaryColumn>
        <SummaryHeader as="h1">AmericanTorqueMaster - V8/156/427Ci</SummaryHeader>
        <SummaryTables>
          <div>
            <Table>
              <tbody>
                {specs.map(([label, value]) => (
                  <tr key={label}>
                    <Th scope="row" $width="180px">{label}</Th>
                    <Td>{value}</Td>
                  </tr>
                ))}
              </tbody>
            </Table>
          </div>
          <div>
            <Table>
              <colgroup>
                {[0, 1, 2, 3].map(pair => [
                  <col key={`icon-${pair}`} width="40" />,
                  <col key={`value-${pair}`} />,
                ])}
              </colgroup>
              <tbody>
                <tr>
                  <Th $large colSpan={8}>7004 cc OHV 2 90° V8</Th>
                </tr>
                {engineStats.map((row, index) => (
                  <tr key={index}>
                    {row.map(([icon, value, span]) => [
                      <Th key={icon} aria-label={icon}><Icon name={icon} size={28} /></Th>,
                      <Td key={`${icon}-value`} $large colSpan={span || 1}>{value}</Td>,
                    ])}
                  </tr>
                ))}
              </tbody>
            </Table>
          </div>
        </SummaryTables>
      </SummaryColumn>
      <SummaryColumn $width="92px">
        <SummaryHeader $small>Export</SummaryHeader>
        <ExportStack $align="center" $justify="flex-end">
          <BigButton aria-label="Save"><Icon name="save" size={48} /></BigButton>
        </ExportStack>
      </SummaryColumn>
      <SummaryColumn $width="236px">
        <SummaryHeader />
        <ButtonStack $align="flex-end" $justify="space-between">
          <BigButton $tone="faint" aria-label="Warnings"><Icon name="alert" size={42} /></BigButton>
          <BigButton $tone="slate" aria-label="Help"><Icon name="help" size={50} /></BigButton>
        </ButtonStack>
      </SummaryColumn>
    </Summary>
  );
}

/* ---------- step navigation ---------- */

const NavOuter = styled.nav`
  position: relative;
  display: flex;
  align-items: center;
  height: 48px;
  padding-bottom: 2px;
  background: linear-gradient(#282828 0 3px, #000000 3px 43px, #282828 43px 46px, #000000 46px);
`;

const HomeButton = styled.button`
  display: flex;
  align-items: center;
  justify-content: center;
  flex: none;
  width: 96px;
  height: 46px;
  margin: 0 4px 0 2px;
  border: 2px solid #365a80;
  background: #233246;
  outline: 2px solid #000000;
`;

const arrow = (tip) => `polygon(0 0, calc(100% - ${tip}px) 0, 100% 50%, calc(100% - ${tip}px) 100%, 0 100%)`;

const Step = styled.button`
  position: relative;
  z-index: ${props => props.$order};
  flex: ${props => props.$width ? 'none' : '1 1 0'};
  width: ${props => props.$width || 'auto'};
  height: ${props => props.$tall ? '46px' : '36px'};
  margin-left: ${props => props.$tall ? '-15px' : '-12px'};
  border: 0;
  background: #000000;
  clip-path: ${props => arrow(props.$tall ? 15 : 11)};

  &::before, &::after {
    content: "";
    position: absolute;
    inset: 0 2px 0 0;
    background: ${props => props.$active ? '#4070a5' : '#365a80'};
    clip-path: ${props => arrow(props.$tall ? 15 : 11)};
  }

  &::after {
    inset: 2px 5px 2px 0;
    background: ${props => props.$active ? '#365a80' : '#233246'};
  }

  & > svg {
    position: relative;
    z-index: 1;
    margin: 0 auto;
  }
`;

const FamilyStep = styled(Step)`
  margin-left: 0;

  &::after {
    left: 2px;
  }

  & > svg {
    left: -3px;
  }
`;

const FinishStep = styled(Step)`
  flex-grow: 0.95;

  &, &::before, &::after {
    clip-path: none;
  }

  &::before {
    right: 0;
  }

  &::after {
    right: 0;
  }
`;

const steps = ['piston', 'crank', 'turbo', 'spray', 'pump', 'exhaust', 'track', 'brush'];

function StepNav() {
  return (
    <NavOuter>
      <HomeButton aria-label="Overview"><Icon name="threeWay" size={34} /></HomeButton>
      <FamilyStep $tall $width="115px" $order={20} aria-label="Family"><Icon name="family" /></FamilyStep>
      <Step $tall $active $width="115px" $order={19} aria-label="Variant"><Icon name="variant" /></Step>
      {steps.map((name, index) => (
        <Step key={name} $order={18 - index} aria-label={name}>
          <Icon name={name} size={30} />
        </Step>
      ))}
      <FinishStep $active $order={1} aria-label="Finish"><Icon name="check" size={28} /></FinishStep>
    </NavOuter>
  );
}

/* ---------- overlays ---------- */

const BuildLabel = styled.p`
  position: absolute;
  left: 1px;
  bottom: 0;
  z-index: 30;
  color: #a0a0a0;
  font-size: 12px;
  line-height: 20px;
  pointer-events: none;
`;

const Watermark = styled.div`
  position: absolute;
  right: 84px;
  bottom: 96px;
  z-index: 30;
  color: rgba(160, 160, 160, 0.75);
  font-family: "Open Sans", "Noto Sans", sans-serif;
  font-size: 17px;
  line-height: 28px;
  pointer-events: none;
`;

const WatermarkTitle = styled.p`
  font-size: 24px;
  line-height: 34px;
`;

export default function App() {
  return (
    <Page>
      <GlobalStyle />
      <Backdrop />
      <TopBar />
      <Workspace>
        <VariantPanel />
        <ChartPanel />
        <FlowPanel />
      </Workspace>
      <SummaryPanel />
      <StepNav />
      <BuildLabel>Open Alpha: 250320.35141.7302.Manual.RC.W</BuildLabel>
      <Watermark>
        <WatermarkTitle>Activate Windows</WatermarkTitle>
        <p>Go to Settings to activate Windows.</p>
      </Watermark>
    </Page>
  );
}
